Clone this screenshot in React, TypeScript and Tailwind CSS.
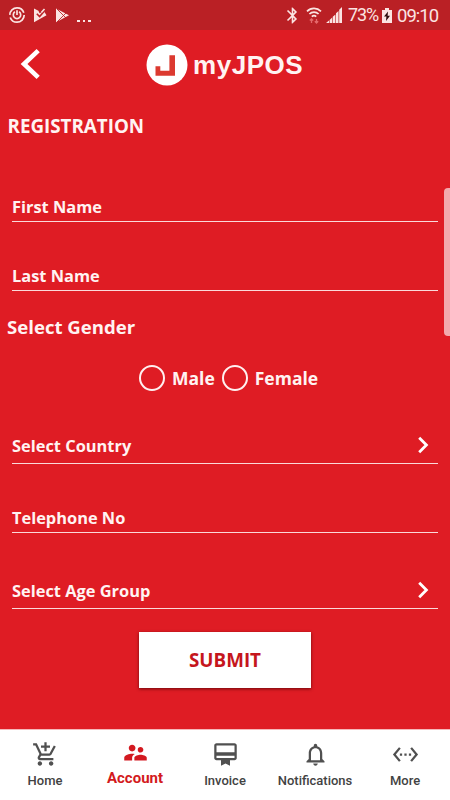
import { useState } from 'react';
import type { ReactNode } from 'react';
import type { IconType } from 'react-icons';
import {
  MdAddShoppingCart,
  MdBluetooth,
  MdCardMembership,
  MdNotificationsNone,
  MdSettingsEthernet,
  MdSupervisorAccount,
} from 'react-icons/md';

const navItems: { label: string; icon: IconType }[] = [
  { label: 'Home', icon: MdAddShoppingCart },
  { label: 'Account', icon: MdSupervisorAccount },
  { label: 'Invoice', icon: MdCardMembership },
  { label: 'Notifications', icon: MdNotificationsNone },
  { label: 'More', icon: MdSettingsEthernet },
];

function StatusBar() {
  return (
    <div className="flex h-[30px] items-center bg-[#ba2025] pl-2 pr-[11px] font-['Roboto',sans-serif] font-normal text-[#fbe4e2]">
      <svg className="h-[18px] w-[18px]" viewBox="0 0 18 18" fill="none" stroke="currentColor" strokeWidth="1.7">
        <circle cx="9" cy="9" r="7.2" strokeDasharray="20 2.6" />
        <path d="M6.9 5.8a3.7 3.7 0 1 0 4.2 0M9 4.2V9" />
      </svg>
      <svg className="ml-[7px] h-[15px] w-[14px]" viewBox="0 0 14 15">
        <path d="M1 .5l4.4 2.3 1.2 2.4L10.8 3l2.7 4.2L1 14.2z" fill="currentColor" />
        <path d="M3.8 5.8l2.8 2.8 4.6-5.4" fill="none" stroke="#ba2025" strokeWidth="1.6" />
        <path d="M8.5 4.2L11.5 1" stroke="currentColor" strokeWidth="1.6" />
      </svg>
      <svg className="ml-2 h-[15px] w-[15px]" viewBox="0 0 15 15">
        <path d="M1 .5l13 6.8L1 14.2z" fill="currentColor" />
        <path d="M2 1l9 9M2 14l9-9" stroke="#ba2025" strokeWidth="0.9" />
      </svg>
      <div className="ml-[7px] mt-3 flex gap-[3px]">
        <span className="h-[2.5px] w-[2.5px] bg-current" />
        <span className="h-[2.5px] w-[2.5px] bg-current" />
        <span className="h-[2.5px] w-[2.5px] bg-current" />
      </div>

      <div className="ml-auto flex items-center">
        <MdBluetooth className="mr-px h-[19px] w-[19px]" />
        <svg className="ml-[3px] h-[17px] w-4" viewBox="0 0 16 17" fill="none" stroke="currentColor" strokeWidth="1.7">
          <path d="M1 4.3a10 10 0 0 1 14 0M3.4 7a6.5 6.5 0 0 1 9.2 0M5.8 9.6a3.2 3.2 0 0 1 4.4 0" />
          <path d="M5.5 16v-4M3.8 13.5l1.7-1.7 1.7 1.7M10.5 12v4M8.8 14.3l1.7 1.7 1.7-1.7" stroke="#e5696c" strokeWidth="1.3" />
        </svg>
        <svg className="ml-1 h-4 w-4" viewBox="0 0 16 16" fill="currentColor">
          <path d="M0 16l3-2.5V16zM3.6 13l2.6-2.4V16H3.6zM6.8 9.8l2.6-2.3V16H6.8zM10 6.2l2.5-2.3V16H10zM13.2 2.8L16 0v16h-2.8z" />
        </svg>
        <span className="ml-1.5 w-[31px] whitespace-nowrap text-[18px] leading-none tracking-[-1.1px]">73%</span>
        <svg className="ml-[3px] h-[15px] w-[10px]" viewBox="0 0 10 15">
          <path d="M3 0h4v2h3v13H0V2h3z" fill="currentColor" />
          <path d="M6 3.5L2 8.5h2.4L4 13l4-5.3H5.6z" fill="#2a0a0b" />
        </svg>
        <span className="ml-[5px] mt-0.5 w-[42px] whitespace-nowrap text-[18.5px] leading-none tracking-[-1px]">09:10</span>
      </div>
    </div>
  );
}

function Header() {
  return (
    <header className="flex h-[70px] items-center">
      <button aria-label="Back" className="-mt-0.5 ml-5 h-8 w-[22px]">
        <svg className="h-8 w-[22px]" viewBox="0 0 22 32" fill="none" stroke="#fff" strokeWidth="4.6">
          <path d="M18.2 2.6L4 16l14.2 13.4" />
        </svg>
      </button>
      <div className="ml-[104px] flex items-center">
        <svg className="h-[42px] w-[42px]" viewBox="0 0 42 42">
          <circle cx="21" cy="21" r="20.5" fill="#fff" />
          <path d="M23.4 11.3H29v20.5H9.5v-9.6h4.8v4.6h9.1z" fill="#dc3a30" />
        </svg>
        <span className="ml-[5px] whitespace-nowrap font-['Liberation_Sans',sans-serif] text-[26px] font-bold leading-none tracking-[0.55px]">
          myJPOS
        </span>
      </div>
    </header>
  );
}

function Field({ className, select, children }: { className: string; select?: boolean; children: ReactNode }) {
  return (
    <div className={`mx-3 flex items-end justify-between border-b border-[#fbd9da] text-[16.4px] leading-[22px] ${className}`}>
      <span>{children}</span>
      {select && (
        <svg className="mb-[3px] mr-[9px] h-[18px] w-3" viewBox="0 0 12 18" fill="none" stroke="#fff" strokeWidth="2.8">
          <path d="M2.2 1.8L9.4 9l-7.2 7.2" />
        </svg>
      )}
    </div>
  );
}

function Radio({ label, checked, onSelect }: { label: string; checked: boolean; onSelect: () => void }) {
  return (
    <button onClick={onSelect} className="flex items-center gap-[7px]">
      <span className="flex h-[26px] w-[26px] items-center justify-center rounded-full border-2 border-[#fff0f0]">
        {checked && <span className="h-3 w-3 rounded-full bg-white" />}
      </span>
      <span>{label}</span>
    </button>
  );
}

export default function App() {
  const [gender, setGender] = useState('');
  const [active, setActive] = useState('Account');

  return (
    <div className="relative flex h-[800px] w-[450px] flex-col overflow-hidden bg-[#df1c24] font-['Open_Sans',sans-serif] font-bold text-[#fff3f2]">
      <StatusBar />
      <div className="flex h-[699px] flex-col">
        <Header />
        <h1 className="ml-[7.5px] mt-3.5 text-[18.8px] leading-6">REGISTRATION</h1>

        <Field className="mt-12 h-9 pb-[3px]">First Name</Field>
        <Field className="h-[69px] pb-[3px]">Last Name</Field>

        <h2 className="ml-[7px] mt-6 text-[18.6px] leading-6">Select Gender</h2>
        <div className="ml-[139px] mt-[26px] flex h-[26px] gap-[7px] text-[17.5px] leading-6">
          <Radio label="Male" checked={gender === 'Male'} onSelect={() => setGender('Male')} />
          <Radio label="Female" checked={gender === 'Female'} onSelect={() => setGender('Female')} />
        </div>

        <Field className="h-[73px] pb-1.5" select>Select Country</Field>
        <Field className="h-[69px] pb-[3px]">Telephone No</Field>
        <Field className="h-[76px] pb-1.5" select>Select Age Group</Field>

        <button className="ml-[139px] mt-[23px] h-14 w-[172px] bg-white text-[18.8px] text-[#c5161d] shadow-[0_1px_3px_rgba(60,0,0,0.7)]">
          SUBMIT
        </button>
      </div>

      <nav className="grid h-[71px] grid-cols-5 border-t border-[#f6b8ba] bg-white font-['Roboto',sans-serif] font-medium">
        {navItems.map(({ label, icon: Icon }) => {
          const isActive = label === active;
          return (
            <button
              key={label}
              onClick={() => setActive(label)}
              className={`flex flex-col items-center ${isActive ? 'pt-[9px] text-[#d31920]' : 'pt-[11px] text-[#505050]'}`}
            >
              <Icon className="h-[27px] w-[27px]" />
              <span className={isActive ? 'mt-0.5 text-[15px] font-bold leading-5' : 'mt-[5px] text-[13px] leading-4 text-[#424242]'}>
                {label}
              </span>
            </button>
          );
        })}
      </nav>

      {/* Edge panel handle */}
      <div className="absolute right-0 top-[188px] h-[148px] w-1.5 rounded-l-[4px] bg-[#f3a9ad]" />
    </div>
  );
}
